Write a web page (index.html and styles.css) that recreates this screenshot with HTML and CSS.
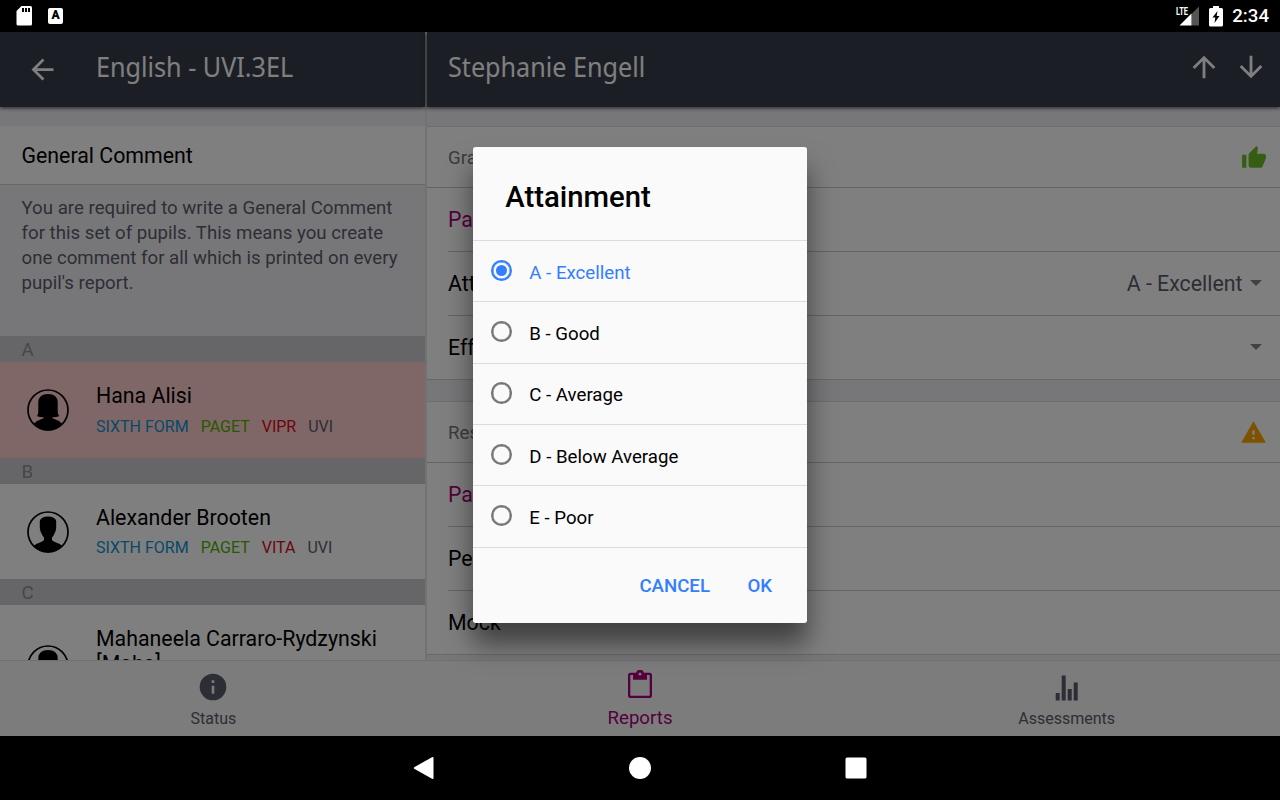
FILE: index.html
```
<!DOCTYPE html>
<html lang="en">
<head>
    <meta charset="UTF-8">
    <meta name="viewport" content="width=device-width, initial-scale=1.0">
    <title>Reports</title>
    <link rel="stylesheet" href="styles.css">
</head>
<body>
    <!-- shared avatar shapes -->
    <svg class="defs" width="0" height="0">
        <symbol id="avatar-f" viewBox="0 0 42 42">
            <path d="M9.800 27Q11.300 26 11.300 22V13Q11.800 5 21 5Q30.300 5 30.700 13V22Q30.700 26 32.500 27Q30 28.500 25.500 28V29.200Q31.500 31 35.500 35Q29 41.500 21 41.500Q13 41.500 6.500 35Q10.500 31 16.500 29.200V28Q12.500 28.500 9.800 27Z"/>
            <circle cx="21" cy="21" r="20" fill="none" stroke="#000" stroke-width="1.700"/>
        </symbol>
        <symbol id="avatar-m" viewBox="0 0 42 42">
            <path d="M12.800 10Q14 5.500 21 5.500Q28 5.500 29.200 10V17Q28.800 21 27.500 22.500Q26.500 25 25 26.500V29Q26 30.500 28.500 31.300Q33.500 33 35.500 35Q29 41.500 21 41.500Q13 41.500 6.500 35Q8.500 33 13.500 31.300Q16 30.500 17 29V26.500Q15.500 25 14.500 22.500Q13.200 21 12.800 17Z"/>
            <circle cx="21" cy="21" r="20" fill="none" stroke="#000" stroke-width="1.700"/>
        </symbol>
    </svg>

    <div class="status-bar">
        <svg class="sd-icon" width="16" height="20" viewBox="0 0 16 20">
            <path fill="#fff" d="M5.500 0H14.500Q16 0 16 1.500V18Q16 19.500 14.500 19.500H2Q.5 19.500 .5 18V5Z"/>
            <path d="M6 2h2v4H6zM9 2h2v4H9zM12 2h2v4h-2z"/>
        </svg>
        <div class="a-icon">A</div>
        <div class="status-right">
            <svg class="signal" width="25" height="20" viewBox="0 0 25 20">
                <path fill="#555" d="M16.500 8L24 .5V19.500H16.500Z"/>
                <path fill="#fff" d="M4.500 19.500L16.500 7.500V19.500Z"/>
                <text class="lte" x="1" y="9" textLength="12" lengthAdjust="spacingAndGlyphs">LTE</text>
            </svg>
            <svg class="battery" width="14" height="21" viewBox="0 0 14 21">
                <path fill="#fff" d="M4 0h6v2h2.500Q14 2 14 3.500V19Q14 20.500 12.500 20.500H1.500Q0 20.500 0 19V3.500Q0 2 1.500 2H4Z"/>
                <path d="M8.500 5L3.500 11.500H6.300L5.500 17L10.500 10H7.700Z"/>
            </svg>
            <span class="clock">2:34</span>
        </div>
    </div>

    <div class="app">
        <div class="panes">
            <div class="side">
                <div class="header">
                    <svg class="back" width="33" height="33" viewBox="0 0 24 24"><path d="M20 11H7.830l5.590-5.590L12 4l-8 8 8 8 1.410-1.410L7.830 13H20v-2z"/></svg>
                    <span class="title">English - UVI.3EL</span>
                </div>
                <div class="side-content">
                    <div class="general">General Comment</div>
                    <p class="note">You are required to write a General Comment for this set of pupils. This means you create one comment for all which is printed on every pupil's report.</p>
                    <div class="letter">A</div>
                    <div class="pupil selected">
                        <svg class="avatar"><use href="#avatar-f"/></svg>
                        <div class="pupil-info">
                            <div class="name">Hana Alisi</div>
                            <div class="tags"><span class="blue">SIXTH FORM</span><span class="green">PAGET</span><span class="red">VIPR</span><span>UVI</span></div>
                        </div>
                    </div>
                    <div class="letter">B</div>
                    <div class="pupil">
                        <svg class="avatar"><use href="#avatar-m"/></svg>
                        <div class="pupil-info">
                            <div class="name">Alexander Brooten</div>
                            <div class="tags"><span class="blue">SIXTH FORM</span><span class="green">PAGET</span><span class="red">VITA</span><span>UVI</span></div>
                        </div>
                    </div>
                    <div class="letter">C</div>
                    <div class="pupil tall">
                        <svg class="avatar"><use href="#avatar-f"/></svg>
                        <div class="pupil-info">
                            <div class="name">Mahaneela Carraro-Rydzynski [Maha]</div>
                        </div>
                    </div>
                </div>
            </div>

            <div class="main">
                <div class="header">
                    <span class="title">Stephanie Engell</span>
                    <div class="header-buttons">
                        <svg width="34" height="34" viewBox="0 0 24 24"><path d="M4 12l1.410 1.410L11 7.830V20h2V7.830l5.580 5.590L20 12l-8-8-8 8z"/></svg>
                        <svg width="34" height="34" viewBox="0 0 24 24"><path d="M20 12l-1.410-1.410L13 16.170V4h-2v12.170l-5.580-5.590L4 12l8 8 8-8z"/></svg>
                    </div>
                </div>
                <div class="main-content">
                    <div class="card">
                        <div class="card-head">Grades
                            <svg class="thumb" width="26" height="26" viewBox="0 0 24 24"><path d="M1 21h4V9H1v12zm22-11c0-1.100-.9-2-2-2h-6.310l.95-4.570.03-.32c0-.41-.17-.79-.44-1.060L14.170 1 7.590 7.590C7.220 7.950 7 8.450 7 9v10c0 1.100.9 2 2 2h9c.83 0 1.540-.5 1.840-1.220l3.020-7.050c.09-.23.14-.47.14-.73v-2z"/></svg>
                        </div>
                        <div class="row pink">Past Grades</div>
                        <div class="row">Attainment <span class="value">A - Excellent</span><i class="caret"></i></div>
                        <div class="row">Effort <i class="caret"></i></div>
                    </div>
                    <div class="card">
                        <div class="card-head">Results
                            <svg class="warn" width="27" height="27" viewBox="0 0 24 24"><path d="M1 21h22L12 2 1 21zm12-3h-2v-2h2v2zm0-4h-2v-4h2v4z"/></svg>
                        </div>
                        <div class="row pink">Past Results</div>
                        <div class="row">Percentage</div>
                        <div class="row">Mock</div>
                    </div>
                </div>
            </div>
        </div>

        <div class="tabs">
            <div class="tab">
                <svg width="28" height="28" viewBox="0 0 28 28"><path fill-rule="evenodd" d="M14 .7a13.300 13.300 0 1 0 0 26.600a13.300 13.300 0 1 0 0-26.600zM12.700 7.300h2.600V10h-2.600zM12.700 12.700h2.600v8h-2.600z"/></svg>
                <span>Status</span>
            </div>
            <div class="tab active">
                <svg width="24" height="28" viewBox="0 0 24 28"><path fill-rule="evenodd" d="M2.500 2.700H8A4.200 4.200 0 0 1 16 2.700H21.500Q24 2.700 24 5.200V25.500Q24 28 21.500 28H2.500Q0 28 0 25.500V5.200Q0 2.700 2.500 2.700ZM2.300 5V25.700H21.700V5H19V9.700H5V5ZM12 2.500a1.500 1.500 0 1 0 0 3a1.500 1.500 0 1 0 0-3z"/></svg>
                <span>Reports</span>
            </div>
            <div class="tab">
                <svg width="24" height="26" viewBox="0 0 24 26"><path d="M.7 18h4v7.500h-4zM6.700.5h4v25h-4zM12.700 14h4v11.500h-4zM18.700 7.500h4v18h-4z"/></svg>
                <span>Assessments</span>
            </div>
        </div>

        <div class="backdrop">
            <div class="alert">
                <h2>Attainment</h2>
                <div class="option checked"><i class="radio"></i>A - Excellent</div>
                <div class="option"><i class="radio"></i>B - Good</div>
                <div class="option"><i class="radio"></i>C - Average</div>
                <div class="option"><i class="radio"></i>D - Below Average</div>
                <div class="option"><i class="radio"></i>E - Poor</div>
                <div class="alert-buttons">
                    <button>CANCEL</button>
                    <button>OK</button>
                </div>
            </div>
        </div>
    </div>

    <div class="nav-bar">
        <svg width="22" height="24" viewBox="0 0 22 24"><path d="M1.200 11.200Q.3 12 1.200 12.800L19 22.800Q20.500 23.300 20.500 22V2Q20.500.7 19 1.200Z"/></svg>
        <svg width="22" height="24" viewBox="0 0 22 24"><circle cx="11" cy="12" r="11"/></svg>
        <svg width="22" height="24" viewBox="0 0 22 24"><rect x=".5" y="1.500" width="21" height="21" rx="1.500"/></svg>
    </div>
</body>
</html>
```
FILE: styles.css
```
* {
    box-sizing: border-box;
}
body {
    margin: 0;
    width: 1280px;
    height: 800px;
    overflow: hidden;
    background: #000;
    color: #000;
    font-family: Roboto, sans-serif;
    font-size: 21.33px;
}
.defs {
    position: absolute;
}
svg {
    flex-shrink: 0;
}

/* android status bar */
.status-bar {
    height: 32px;
    display: flex;
    align-items: center;
    padding: 0 11px 0 16px;
    color: #fff;
}
.a-icon {
    width: 15px;
    height: 16px;
    margin-left: 16px;
    border-radius: 2px;
    background: #fff;
    color: #000;
    font-size: 12px;
    font-weight: 900;
    line-height: 15px;
    text-align: center;
}
.status-right {
    display: flex;
    align-items: center;
    margin-left: auto;
}
.signal {
    overflow: visible;
}
.lte {
    fill: #fff;
    font-size: 11.5px;
    font-weight: 700;
}
.battery {
    margin-left: 9px;
}
.clock {
    margin-left: 9px;
    font-size: 18.67px;
    font-weight: 500;
}

.app {
    position: relative;
    height: 704px;
    display: flex;
    flex-direction: column;
    background: #efeff4;
}
.panes {
    height: 628px;
    display: flex;
    overflow: hidden;
}
.side {
    width: 427px;
    border-right: 2px solid #e4e4e6;
}
.main {
    flex: 1;
}
.header {
    position: relative;
    height: 74.5px;
    display: flex;
    align-items: center;
    padding: 0 12px 4px 21px;
    background: #383c4c;
    color: #fff;
    box-shadow: 0 1px 4px rgba(0,0,0,0.7);
}
.header svg {
    fill: #fff;
}
.back {
    margin: 4px 0 0 5px;
}
.title {
    margin-top: -2px;
    font-family: "Noto Sans", sans-serif;
    font-size: 27.5px;
    font-stretch: 87.5%;
    white-space: nowrap;
    transform: scaleX(0.915);
    transform-origin: left;
}
.back + .title {
    margin-left: 37px;
}
.header-buttons {
    display: flex;
    gap: 13.5px;
    margin-left: auto;
}

/* pupil list */
.side-content {
    padding-top: 19.5px;
}
.general {
    height: 59px;
    padding-left: 21.5px;
    border-bottom: 1px solid #d0d0d4;
    background: #fff;
    line-height: 59px;
}
.note {
    height: 151px;
    margin: 0;
    padding: 10.5px 22px 0 21.5px;
    color: #5b5d6b;
    font-size: 18.67px;
    line-height: 25.33px;
}
.letter {
    height: 26px;
    padding-left: 21.5px;
    background: #ccccd0;
    color: #8e8e93;
    font-size: 18.67px;
    line-height: 28px;
}
.pupil {
    height: 95.5px;
    display: flex;
    padding: 27px 0 0 27px;
    background: #fff;
}
.pupil.selected {
    background: #ffcfcf;
}
.pupil.tall .avatar {
    margin-top: 12.5px;
}
.avatar {
    width: 42px;
    height: 42px;
}
.pupil-info {
    width: 300px;
    margin: -6px 0 0 27px;
}
.name {
    line-height: 25px;
}
.tags {
    display: flex;
    gap: 12px;
    margin-top: 8.5px;
    color: #5b5d6b;
    font-size: 16px;
    line-height: 20px;
}
.blue {
    color: #0c92d2;
}
.green {
    color: #50b000;
}
.red {
    color: #d80818;
}

/* report form */
.main-content {
    padding-top: 19.5px;
}
.card {
    margin-bottom: 21px;
    border-top: 1px solid #dadade;
    border-bottom: 1px solid #d0d0d4;
    background: #fff;
}
.card-head {
    height: 61px;
    display: flex;
    align-items: center;
    justify-content: space-between;
    padding: 1px 13px 0 21px;
    border-bottom: 1px solid #c8c7cc;
    color: #77777c;
    font-size: 18.67px;
}
.thumb {
    fill: #6cbc26;
}
.warn {
    fill: #ffa500;
}
.row {
    height: 64px;
    display: flex;
    align-items: center;
    margin-left: 21px;
    padding-right: 18px;
    border-bottom: 1px solid #c8c7cc;
}
.row:last-child {
    height: 63px;
    border-bottom: 0;
}
.pink {
    color: #a8007c;
}
.value {
    margin-left: auto;
    color: #5b5d6b;
}
.caret {
    margin: -2px 0 0 auto;
    border: 6.5px solid transparent;
    border-top-color: #858585;
    border-bottom: 0;
}
.value + .caret {
    margin-left: 7.5px;
}

.tabs {
    height: 76px;
    display: flex;
    border-top: 1px solid #dedede;
    background: #f8f8f8;
}
.tab {
    flex: 1;
    display: flex;
    flex-direction: column;
    align-items: center;
    justify-content: flex-end;
    padding-bottom: 8px;
    color: #5b5d6b;
    font-size: 16px;
    line-height: 19px;
}
.tab svg {
    margin-bottom: 8px;
    fill: #5b5d6b;
}
.tab.active {
    color: #a8007c;
    font-size: 18.67px;
}
.tab.active svg {
    margin-bottom: 11px;
    fill: #a8007c;
}

/* attainment picker */
.backdrop {
    position: absolute;
    inset: 0;
    display: flex;
    align-items: center;
    justify-content: center;
    background: rgba(0,0,0,0.5);
}
.alert {
    width: 333.33px;
    height: 476.33px;
    margin-top: 1.500px;
    border-radius: 2.67px;
    background: #fafafa;
    box-shadow: 0 21px 27px rgba(0,0,0,0.5);
}
.alert h2 {
    height: 93.5px;
    margin: 0;
    padding-left: 32px;
    font-size: 29.3px;
    font-weight: 500;
    line-height: 100px;
}
.option {
    height: 61.33px;
    display: flex;
    align-items: center;
    padding: 3px 0 0 17.33px;
    border-top: 1px solid #dcdcdc;
    font-size: 18.67px;
}
.option.checked {
    color: #327eff;
}
.radio {
    display: flex;
    align-items: center;
    justify-content: center;
    width: 21.33px;
    height: 21.33px;
    margin: -5px 17.33px 0 0;
    border: 2.67px solid #757575;
    border-radius: 50%;
    /* half pixel ring so the 2.67px border is not rounded down */
    box-shadow: inset 0 0 0 0.5px #757575;
}
.checked .radio {
    border-color: #327eff;
    box-shadow: inset 0 0 0 0.5px #327eff;
}
.checked .radio::after {
    content: "";
    width: 11px;
    height: 11px;
    border-radius: 50%;
    background: #327eff;
}
.alert-buttons {
    display: flex;
    justify-content: flex-end;
    gap: 37.5px;
    padding: 27px 34.5px 0 0;
    border-top: 1px solid #dcdcdc;
}
.alert-buttons button {
    padding: 0;
    border: none;
    background: none;
    color: #327eff;
    font-family: inherit;
    font-size: 18.67px;
    font-weight: 500;
    cursor: pointer;
}

/* android navigation bar */
.nav-bar {
    height: 64px;
    display: flex;
    align-items: center;
    justify-content: center;
    gap: 194px;
}
.nav-bar svg {
    fill: #fff;
}
```
